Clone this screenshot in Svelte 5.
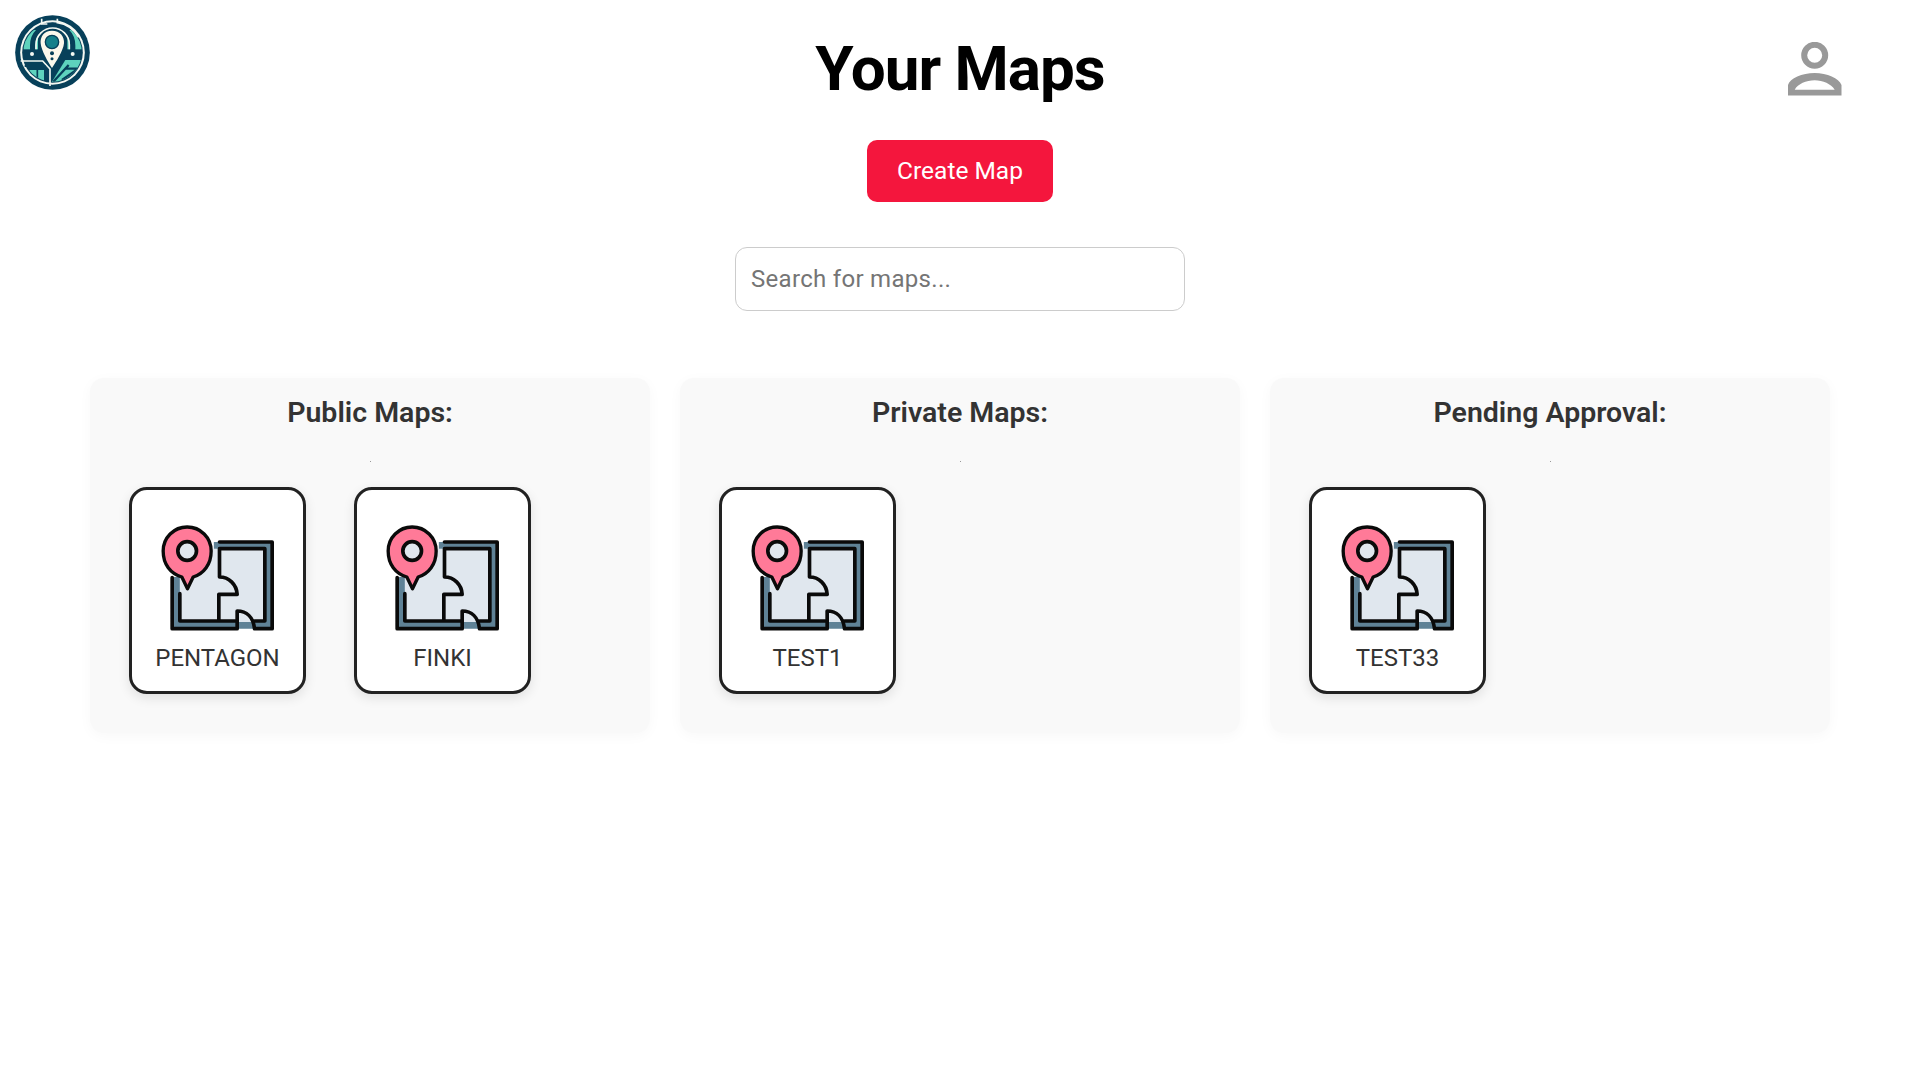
<script>
  const panels = [
    { title: 'Public Maps:', maps: ['PENTAGON', 'FINKI'] },
    { title: 'Private Maps:', maps: ['TEST1'] },
    { title: 'Pending Approval:', maps: ['TEST33'] }
  ];
</script>

<div class="page">
  <svg class="logo" viewBox="45 45 225 225" aria-label="logo">
    <defs>
      <clipPath id="inner"><circle cx="157.5" cy="157.5" r="88" /></clipPath>
    </defs>
    <circle cx="157.5" cy="157.5" r="112" fill="#07405a" />
    <circle cx="157.5" cy="157.5" r="97" fill="#f4f8f2" />
    <circle cx="157.5" cy="157.5" r="91" fill="#07405a" />
    <g clip-path="url(#inner)">
      <rect x="70" y="90" width="44" height="58" fill="#5ed3bd" />
      <rect x="202" y="90" width="44" height="58" fill="#5ed3bd" />
      <rect x="88" y="210" width="44" height="40" fill="#5ed3bd" />
      <path d="M150 255 L196 180 H250 V255 Z" fill="#5ed3bd" />
      <path d="M160 245 L206 195 M186 240 L236 205 M197 206 H240" fill="none" stroke="#07405a" stroke-width="7" />
      <path d="M112 210 V250" fill="none" stroke="#07405a" stroke-width="5" />
    </g>
    <path d="M62 183 H128 L150 207 V258" fill="none" stroke="#f4f8f2" stroke-width="5" />
    <path d="M74 198 H136" fill="none" stroke="#07405a" stroke-width="6" />
    <path d="M98 160 V136 A60 60 0 0 1 218 136 V160" fill="none" stroke="#07405a" stroke-width="16" />
    <path d="M108 148 V134 A50 50 0 0 1 208 134 V148" fill="none" stroke="#f4f8f2" stroke-width="5" />
    <path d="M125 56 V72 H142 M172 56 V68 C200 72 222 88 236 112" fill="none" stroke="#f4f8f2" stroke-width="5" />
    <path d="M156 92 C132 92 120 110 122 130 C124 152 144 186 156 204 C168 186 190 152 192 130 C194 110 180 92 156 92 Z" fill="#fbf8ec" />
    <circle cx="156" cy="126" r="20" fill="#15808a" stroke="#07405a" stroke-width="4" />
    <circle cx="156" cy="160" r="6" fill="#07405a" />
    <circle cx="156" cy="176" r="4.5" fill="#07405a" />
    <circle cx="96" cy="162" r="6" fill="#f4f8f2" />
    <circle cx="218" cy="162" r="6" fill="#f4f8f2" />
  </svg>

  <svg class="profile" viewBox="0 0 54 54" aria-label="profile">
    <circle cx="26.7" cy="13.3" r="10.5" fill="none" stroke="#999" stroke-width="6" />
    <path fill-rule="evenodd" fill="#999" d="M0 53.5 V43 C2 36 14 31 26.7 31 C39 31 51 36 53.5 43 V53.5 Z M6.7 47.7 H46.7 C43 42 35 38.3 26.7 38.3 C18 38.3 10 42 6.7 47.7 Z" />
  </svg>

  <header class="head">
    <h1>Your Maps</h1>
    <button class="create">Create Map</button>
    <input class="search" placeholder="Search for maps..." />
  </header>

  <main class="panels">
    {#each panels as p}
      <section class="panel">
        <h2>{p.title}</h2>
        <div class="dot"></div>
        <div class="cards">
          {#each p.maps as m}
            <div class="card">
              <svg class="map" viewBox="112.5 125 360 360">
                <path d="M178 205 H435 V425 H178 Z" fill="#e0e7ee" />
                <path d="M155 290 H178 V422 H350 V445 H155 Z M280 185 H455 V445 H400 V422 H435 V205 H280 Z M350 425 H400 V445 H350 Z" fill="#5f8296" />
                <path d="M297 185 H455 V445 H402 M155 292 V445 H350 V392 C378 392 398 410 402 445 M297 205 H433 V422 H402 M178 340 V422 H295 M297 205 V290 C325 290 348 312 350 342 H295 V422 H350" fill="none" stroke="#0a0a0a" stroke-width="11" stroke-linejoin="round" stroke-linecap="round" />
                <path d="M201 325 L184 290 C150 280 128 252 128 212 C128 172 160 140 200 140 C240 140 272 172 272 212 C272 252 250 280 218 290 Z" fill="#ff7a98" stroke="#0a0a0a" stroke-width="10" stroke-linejoin="round" />
                <circle cx="200" cy="212" r="28" fill="#e0e7ee" stroke="#0a0a0a" stroke-width="11" />
              </svg>
              <span class="name">{m}</span>
            </div>
          {/each}
        </div>
      </section>
    {/each}
  </main>
</div>

<style>
  :global(body) {
    margin: 0;
    background: #fff;
    font-family: Roboto, "Liberation Sans", sans-serif;
  }
  .page {
    position: relative;
    min-height: 1080px;
    box-sizing: border-box;
    padding: 0 90px;
  }
  .logo {
    position: absolute;
    left: 15px;
    top: 15px;
    width: 75px;
    height: 75px;
  }
  .profile {
    position: absolute;
    left: 1788px;
    top: 42px;
    width: 54px;
    height: 54px;
  }
  .head {
    display: flex;
    flex-direction: column;
    align-items: center;
    padding-top: 28px;
  }
  h1 {
    margin: 0;
    font-size: 62px;
    line-height: 82px;
    letter-spacing: -1px;
    font-weight: 700;
    color: #000;
  }
  .create {
    margin-top: 30px;
    width: 186px;
    height: 62px;
    padding: 0 0 2px;
    border: none;
    border-radius: 10px;
    background: #f4163d;
    color: #fff;
    font-family: inherit;
    font-size: 24.5px;
  }
  .search {
    margin-top: 45px;
    width: 450px;
    height: 64px;
    box-sizing: border-box;
    padding: 0 15px;
    border: 1px solid #ccc;
    border-radius: 12px;
    font-family: inherit;
    font-size: 24px;
    letter-spacing: 0.3px;
    color: #333;
  }
  .search::placeholder {
    color: #757575;
  }
  .panels {
    display: grid;
    grid-template-columns: repeat(3, 560px);
    gap: 30px;
    margin-top: 67px;
  }
  .panel {
    display: flex;
    flex-direction: column;
    height: 355px;
    box-sizing: border-box;
    padding: 0 39px;
    background: #f9f9f9;
    border-radius: 14px;
    box-shadow: 0 3px 14px rgba(0, 0, 0, 0.03);
  }
  h2 {
    margin: 17px 0 0;
    text-align: center;
    font-size: 28.5px;
    line-height: 36px;
    font-weight: 600;
    color: #333;
  }
  .dot {
    align-self: center;
    width: 1px;
    height: 1px;
    margin-top: 30px;
    background: #999;
  }
  .cards {
    display: flex;
    gap: 48px;
    margin-top: 25px;
  }
  .card {
    width: 177px;
    height: 207px;
    box-sizing: border-box;
    display: flex;
    flex-direction: column;
    align-items: center;
    background: #fff;
    border: 3px solid #222;
    border-radius: 18px;
    box-shadow: 0 4px 12px rgba(0, 0, 0, 0.1);
  }
  .map {
    display: block;
    width: 120px;
    height: 120px;
    margin-top: 32px;
    flex: none;
  }
  .name {
    font-size: 24px;
    line-height: 30px;
    margin-top: 1px;
    color: #333;
  }
</style>
